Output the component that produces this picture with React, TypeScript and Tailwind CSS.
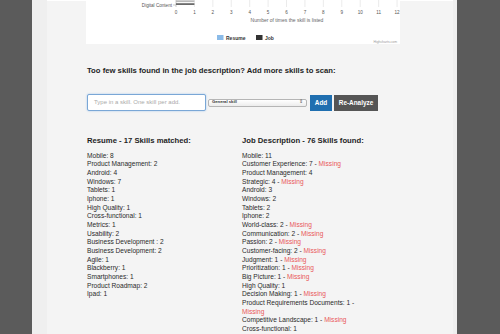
import React from "react";

const resume = [
  "Mobile: 8",
  "Product Management: 2",
  "Android: 4",
  "Windows: 7",
  "Tablets: 1",
  "Iphone: 1",
  "High Quality: 1",
  "Cross-functional: 1",
  "Metrics: 1",
  "Usability: 2",
  "Business Development : 2",
  "Business Development: 2",
  "Agile: 1",
  "Blackberry: 1",
  "Smartphones: 1",
  "Product Roadmap: 2",
  "Ipad: 1",
];

const job: [string, boolean][] = [
  ["Mobile: 11", false],
  ["Customer Experience: 7", true],
  ["Product Management: 4", false],
  ["Strategic: 4", true],
  ["Android: 3", false],
  ["Windows: 2", false],
  ["Tablets: 2", false],
  ["Iphone: 2", false],
  ["World-class: 2", true],
  ["Communication: 2", true],
  ["Passion: 2", true],
  ["Customer-facing: 2", true],
  ["Judgment: 1", true],
  ["Prioritization: 1", true],
  ["Big Picture: 1", true],
  ["High Quality: 1", false],
  ["Decision Making: 1", true],
  ["Product Requirements Documents: 1", true],
  ["Competitive Landscape: 1", true],
  ["Cross-functional: 1", false],
];

function Chart() {
  const x0 = 90;
  const step = 18.42;
  const ticks = Array.from({ length: 13 }, (_, i) => i);
  return (
    <svg width="314" height="44" viewBox="0 0 314 44" className="block">
      {ticks.map((t) => (
        <line key={"g" + t} x1={x0 + t * step} x2={x0 + t * step} y1={0} y2={7} stroke="#e2e2e2" strokeWidth="0.7" />
      ))}
      <line x1={x0} x2={x0} y1={0} y2={7} stroke="#c8c8c8" strokeWidth="0.7" />
      <line x1={x0 - 3} x2={x0} y1={5} y2={5} stroke="#aaa" strokeWidth="0.6" />
      <rect x={x0} y={0.3} width={step} height={1.8} fill="#b9b9b9" />
      <rect x={x0} y={3.2} width={step} height={1.8} fill="#6a6a6a" />
      <text x={86} y={7} textAnchor="end" fontSize="4.6" fill="#555" fontFamily="'Liberation Sans', sans-serif">
        Digital Content
      </text>
      {ticks.map((t) => (
        <text key={"t" + t} x={x0 + t * step} y={14} textAnchor="middle" fontSize="4.6" fill="#555" fontFamily="'Liberation Sans', sans-serif">
          {t}
        </text>
      ))}
      <text x={201} y={22} textAnchor="middle" fontSize="5" fill="#666" fontFamily="'Liberation Sans', sans-serif">
        Number of times the skill is listed
      </text>
      <rect x={131} y={35} width={6.5} height={5} fill="#8bbbe8" />
      <text x={140} y={39.8} fontSize="5" fontWeight="bold" fill="#333" fontFamily="'Liberation Sans', sans-serif">
        Resume
      </text>
      <rect x={170} y={35} width={6.5} height={5} fill="#333" />
      <text x={179} y={39.8} fontSize="5" fontWeight="bold" fill="#333" fontFamily="'Liberation Sans', sans-serif">
        Job
      </text>
      <text x={311} y={43} textAnchor="end" fontSize="3.4" fill="#999" fontFamily="'Liberation Sans', sans-serif">
        Highcharts.com
      </text>
    </svg>
  );
}

export default function App() {
  return (
    <div
      className="flex h-[334px] w-[500px] overflow-hidden text-[#2a2a2a]"
      style={{ fontFamily: "'Liberation Sans', Arial, sans-serif" }}
    >
      <div className="w-[32px] shrink-0 bg-[#5b5b5b]" />
      <div className="flex-1 bg-[#efefef]">
        <div className="ml-[15px] mr-[4px] h-full border-t border-white bg-[#f4f4f4] pl-[40px]">
          <div className="-mt-px ml-[-1px] h-[44px] w-[314px] bg-white">
            <Chart />
          </div>
          <div className="mt-[22px] text-[7.7px] font-bold leading-[10px] text-[#1e1e1e]">
            Too few skills found in the job description? Add more skills to scan:
          </div>
          <div className="mt-[18px] flex items-center">
            <div className="flex h-[17px] w-[119px] items-center rounded-[2px] border border-[#7aa7d6] bg-white pl-[6px] shadow-[0_0_2px_#9cc2ea]">
              <span className="text-[6px] text-[#aaa]">Type in a skill. One skill per add.</span>
            </div>
            <div className="ml-[2px] flex h-[8px] w-[99px] items-center justify-between rounded-[2px] border border-[#b5b5b5] bg-gradient-to-b from-white to-[#ececec] px-[3px]">
              <span className="text-[4.2px] font-bold text-[#333]">General skill</span>
              <span className="text-[4.5px] leading-none text-[#555]">⇕</span>
            </div>
            <div className="ml-[3px] flex h-[16px] w-[22px] items-center justify-center bg-[#1f6fb0] text-[6.4px] font-bold text-white">
              Add
            </div>
            <div className="ml-[2px] mt-[1px] flex h-[16px] w-[44px] items-center justify-center bg-[#555555] text-[6.4px] font-bold text-white">
              Re-Analyze
            </div>
          </div>
          <div className="mt-[25px] flex">
            <div className="w-[155px] shrink-0">
              <div className="text-[7.7px] font-bold leading-[10px] text-[#1e1e1e]">Resume - 17 Skills matched:</div>
              <div className="mt-[5.7px] text-[6.6px] leading-[8.67px]">
                {resume.map((r, i) => (
                  <div key={i}>{r}</div>
                ))}
              </div>
            </div>
            <div className="w-[128px] shrink-0">
              <div className="whitespace-nowrap text-[7.7px] font-bold leading-[10px] text-[#1e1e1e]">
                Job Description - 76 Skills found:
              </div>
              <div className="mt-[5.7px] text-[6.6px] leading-[8.67px]">
                {job.map(([t, m], i) => (
                  <div key={i}>
                    {t}
                    {m ? (
                      <>
                        {" - "}
                        <span className="text-[#e9585a]">Missing</span>
                      </>
                    ) : null}
                  </div>
                ))}
              </div>
            </div>
          </div>
        </div>
      </div>
      <div className="w-[43px] shrink-0 bg-[#5b5b5b]" />
    </div>
  );
}
